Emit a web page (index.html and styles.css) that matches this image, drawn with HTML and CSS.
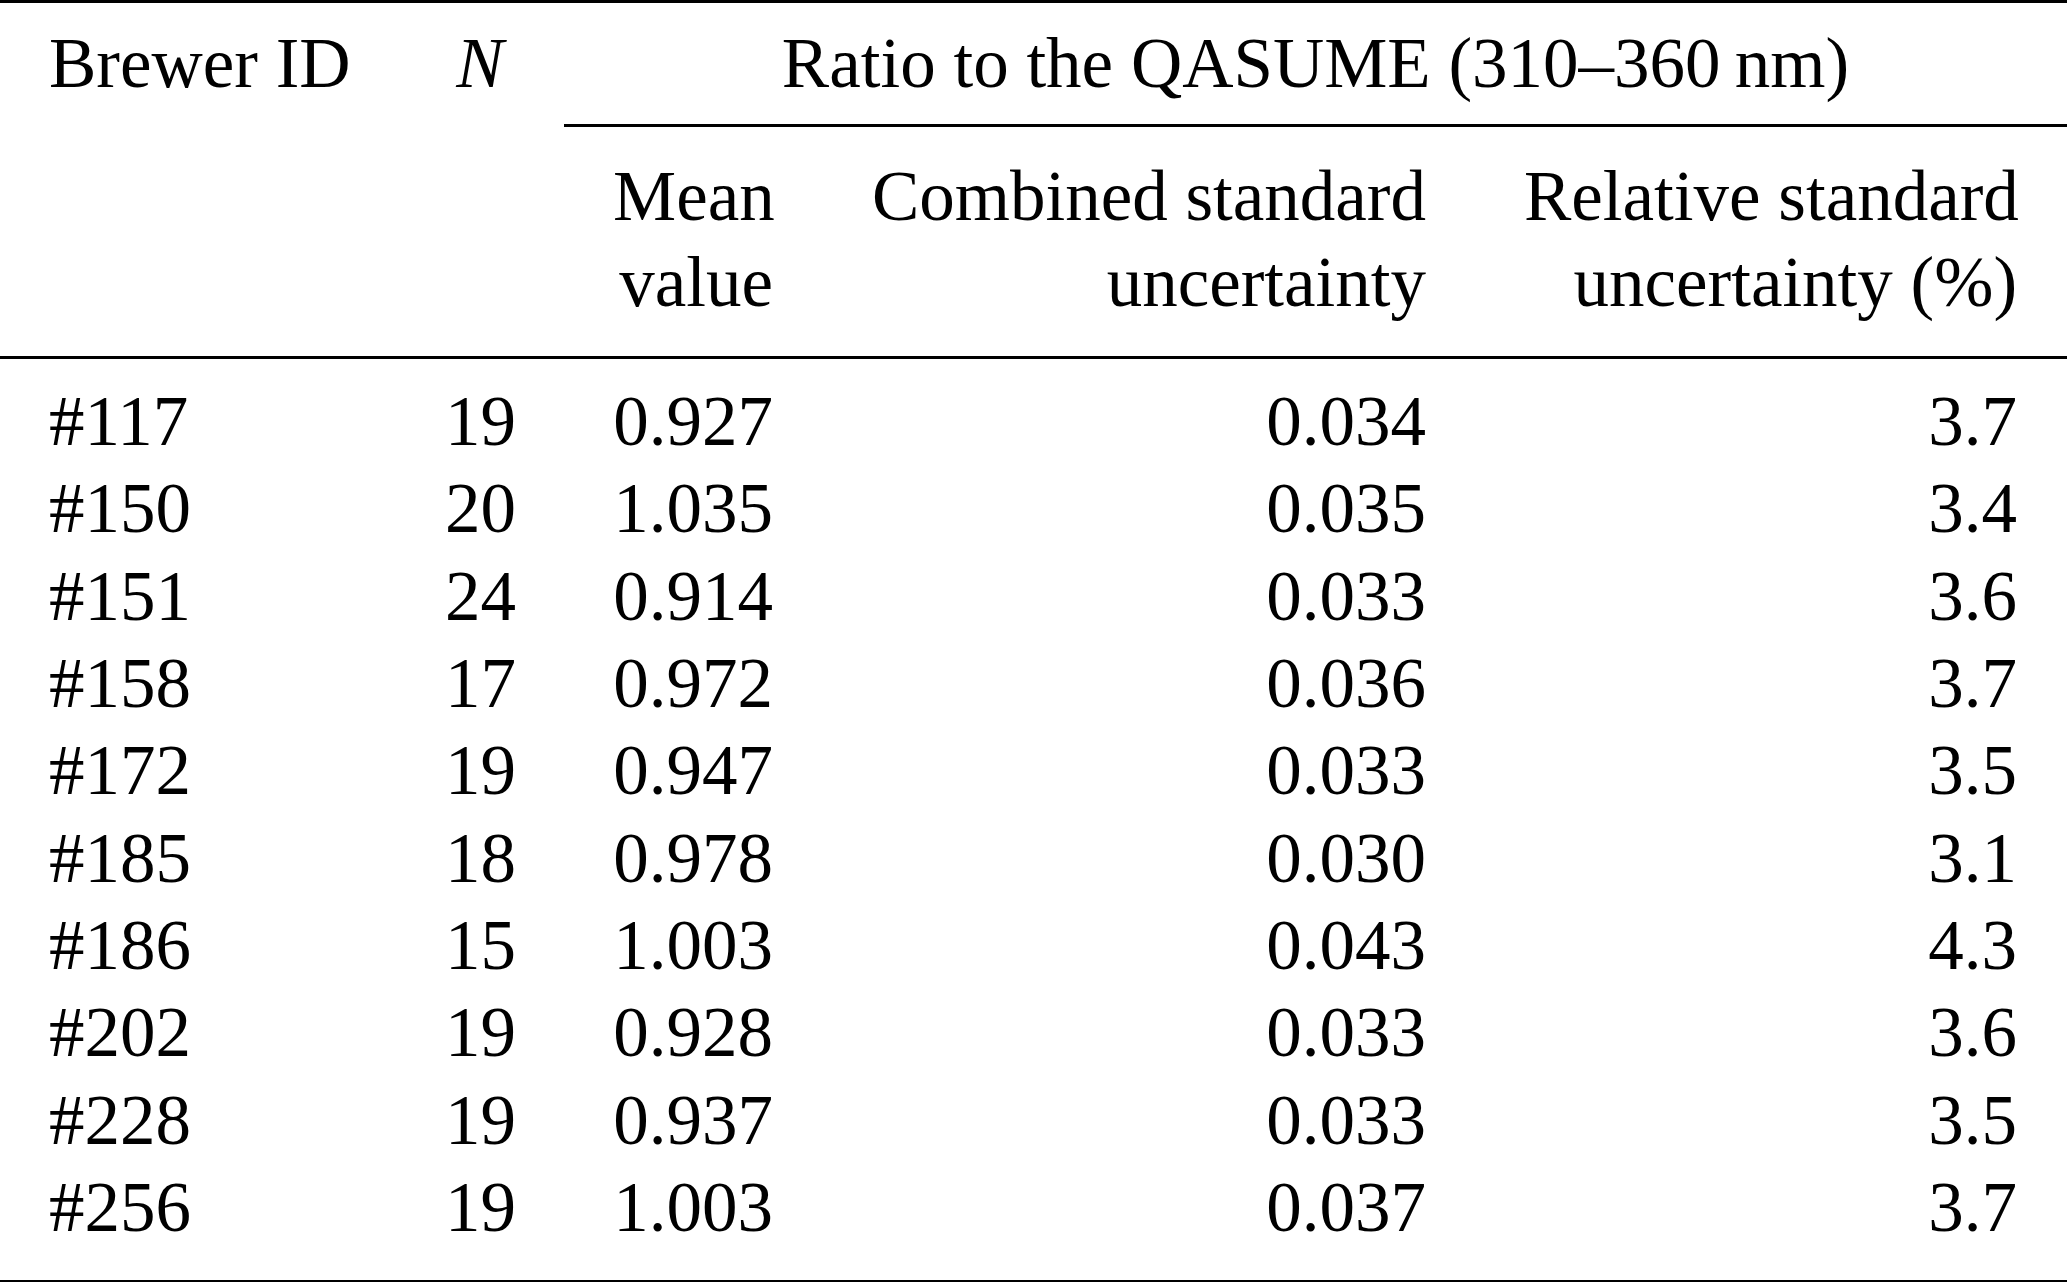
FILE: index.html
```html
<!DOCTYPE html>
<html lang="en">
<head>
<meta charset="utf-8">
<title>Ratio to the QASUME</title>
<link rel="stylesheet" href="styles.css">
</head>
<body>
<table class="tbl">
  <colgroup>
    <col class="c1">
    <col class="c2">
    <col class="c3">
    <col class="c4">
    <col class="c5">
  </colgroup>
  <thead>
    <tr class="h1">
      <th class="l">Brewer ID</th>
      <th class="c"><i>N</i></th>
      <th class="c span" colspan="3">Ratio to the QASUME (310–360&#8201;nm)</th>
    </tr>
    <tr class="h2">
      <th></th>
      <th></th>
      <th class="r">Mean<br>value</th>
      <th class="r">Combined standard<br>uncertainty</th>
      <th class="r last">Relative standard<br>uncertainty (%)</th>
    </tr>
  </thead>
  <tbody>
    <tr><td class="l">#117</td><td class="r">19</td><td class="r">0.927</td><td class="r">0.034</td><td class="r last">3.7</td></tr>
    <tr><td class="l">#150</td><td class="r">20</td><td class="r">1.035</td><td class="r">0.035</td><td class="r last">3.4</td></tr>
    <tr><td class="l">#151</td><td class="r">24</td><td class="r">0.914</td><td class="r">0.033</td><td class="r last">3.6</td></tr>
    <tr><td class="l">#158</td><td class="r">17</td><td class="r">0.972</td><td class="r">0.036</td><td class="r last">3.7</td></tr>
    <tr><td class="l">#172</td><td class="r">19</td><td class="r">0.947</td><td class="r">0.033</td><td class="r last">3.5</td></tr>
    <tr><td class="l">#185</td><td class="r">18</td><td class="r">0.978</td><td class="r">0.030</td><td class="r last">3.1</td></tr>
    <tr><td class="l">#186</td><td class="r">15</td><td class="r">1.003</td><td class="r">0.043</td><td class="r last">4.3</td></tr>
    <tr><td class="l">#202</td><td class="r">19</td><td class="r">0.928</td><td class="r">0.033</td><td class="r last">3.6</td></tr>
    <tr><td class="l">#228</td><td class="r">19</td><td class="r">0.937</td><td class="r">0.033</td><td class="r last">3.5</td></tr>
    <tr><td class="l">#256</td><td class="r">19</td><td class="r">1.003</td><td class="r">0.037</td><td class="r last">3.7</td></tr>
  </tbody>
</table>
</body>
</html>
```

FILE: styles.css
```css
html, body {
  margin: 0;
  padding: 0;
  background: #ffffff;
}

.tbl {
  width: 2067px;
  table-layout: fixed;
  border-collapse: collapse;
  border-spacing: 0;
  font-family: "Liberation Serif", "Times New Roman", serif;
  font-size: 71px;
  color: #000;
  border-top: 3px solid #000;
  border-bottom: 3px solid #000;
}

.c1 { width: 396px; }
.c2 { width: 168px; }
.c3 { width: 258px; }
.c4 { width: 653px; }
.c5 { width: 592px; }

.tbl th,
.tbl td {
  padding: 0 49px;
  font-weight: normal;
  vertical-align: top;
  white-space: nowrap;
}

.tbl .last { padding-right: 50px; }

.l { text-align: left; }
.r { text-align: right; }
.c { text-align: center; }

.tbl i { font-style: italic; }

/* header row 1 */
.h1 th {
  line-height: 87px;
  padding-top: 17px;
  padding-bottom: 17px;
}
.h1 th.span {
  border-bottom: 3px solid #000;
  padding-left: 0;
  padding-right: 0;
}

/* header row 2 */
.h2 th {
  line-height: 86px;
  padding-top: 26px;
  padding-bottom: 31px;
  border-bottom: 3px solid #000;
}

/* body */
.tbl tbody td {
  line-height: 87.33px;
}
.tbl tbody tr:first-child td { padding-top: 19px; }
.tbl tbody tr:last-child td { padding-bottom: 29px; }
```
